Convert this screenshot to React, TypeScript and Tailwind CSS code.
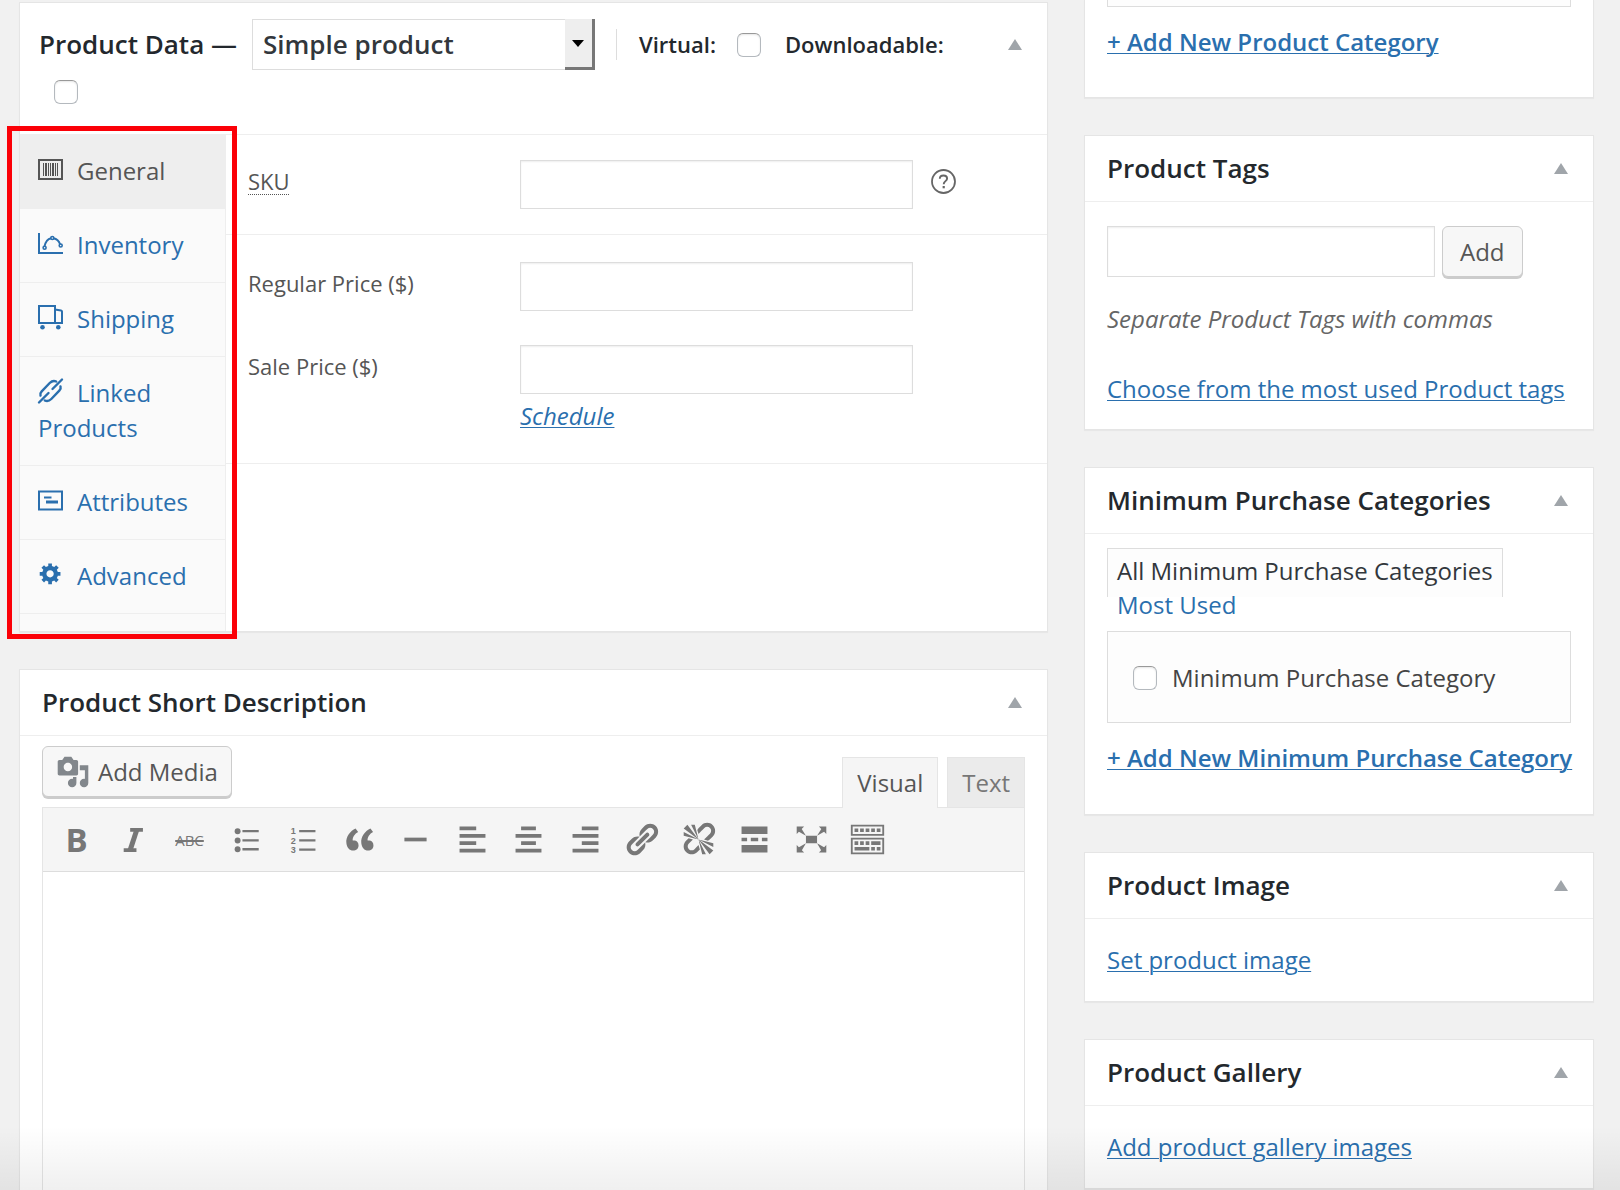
import type { ReactNode } from 'react';

const LINK = 'text-[#2a6fae] underline decoration-1 underline-offset-2';
const FIELD = 'border border-[#ddd] bg-white shadow-[inset_0_1px_2px_rgba(0,0,0,0.07)] outline-none';
const CHECKBOX =
  'size-6 shrink-0 appearance-none rounded-[6px] border border-[#b4b9be] border-t-[#999] bg-white shadow-[inset_0_1px_2px_rgba(0,0,0,0.1)]';
const BUTTON =
  'rounded-[6px] border border-[#ccc] bg-[#f7f7f7] text-2xl text-[#555] shadow-[0_2px_0_#ccc]';

const TABS: { label: string; icon: ReactNode }[] = [
  {
    label: 'General',
    icon: (
      <>
        <rect x="1" y="5" width="23" height="19" fill="none" stroke="currentColor" strokeWidth="2" />
        <path d="M5 8h1v13H5zM7 8h2v13H7zM10 8h1v13h-1zM12 8h1v13h-1zM14 8h2v13h-2zM17 8h1v13h-1zM19 8h1v13h-1z" />
      </>
    ),
  },
  {
    label: 'Inventory',
    icon: (
      <g fill="none" stroke="currentColor">
        <path d="M1 4v20h24" strokeWidth="2" />
        <path d="M6.5 17.5C7.500 13 9.500 10 13 9.300M15.500 9.300C19 10 21 12 22.200 15.500" strokeWidth="1.900" />
        <circle cx="6.600" cy="18.800" r="1.500" strokeWidth="1.600" />
        <circle cx="14.300" cy="9" r="1.500" strokeWidth="1.600" />
        <circle cx="22.700" cy="16.500" r="1.500" strokeWidth="1.600" />
      </g>
    ),
  },
  {
    label: 'Shipping',
    icon: (
      <>
        <path d="M1 3h16v17H1zM17 6.500l6 1c.6.1 1 .5 1 1V20h-7" fill="none" stroke="currentColor" strokeWidth="2" />
        <circle cx="4.500" cy="24.300" r="2.300" />
        <circle cx="20.300" cy="24.300" r="2.300" />
      </>
    ),
  },
  {
    label: 'Linked Products',
    icon: (
      <g fill="none" stroke="currentColor" strokeWidth="2.400" strokeLinecap="round">
        <path d="M2.500 18.500c-.6-1.800 0-3 1.200-4.200l8-8.300c2-2 4.500-2.500 6.500-1.500M24 2.500L14.500 12" />
        <path d="M22.500 9.500c.6 1.800 0 3-1.200 4.200l-8 8.300c-2 2-4.500 2.500-6.500 1.500M1 25.500L10.500 16" />
      </g>
    ),
  },
  {
    label: 'Attributes',
    icon: (
      <>
        <rect x="1" y="5.500" width="23" height="18" fill="none" stroke="currentColor" strokeWidth="2" />
        <path d="M6 10.500h7.500v2H6zM8 14.500h12v3H8z" />
      </>
    ),
  },
  {
    label: 'Advanced',
    icon: (
      <path
        transform="translate(.5 1) scale(1.220)"
        d="M18 12h-2.180c-.17.7-.44 1.350-.81 1.930l1.540 1.540-2.100 2.100-1.540-1.540c-.58.36-1.230.63-1.910.79V19H8v-2.180c-.68-.16-1.330-.43-1.910-.79l-1.540 1.540-2.120-2.120 1.540-1.540c-.36-.58-.63-1.230-.79-1.910H1V9.030h2.170c.16-.7.44-1.350.8-1.940L2.430 5.550l2.100-2.100 1.540 1.540c.58-.37 1.240-.64 1.930-.81V2h3v2.180c.68.16 1.330.43 1.910.79l1.540-1.540 2.120 2.120-1.540 1.540c.36.59.64 1.240.8 1.940H18V12zm-8.500 1.500c1.660 0 3-1.340 3-3s-1.340-3-3-3-3 1.340-3 3 1.340 3 3 3z"
      />
    ),
  },
];

const LINK_ICON =
  'M17.74 2.76c1.68 1.69 1.68 4.41 0 6.1l-1.53 1.52c-1.12 1.12-2.7 1.47-4.14 1.09l2.62-2.61.76-.77.76-.76c.84-.84.84-2.2 0-3.04-.84-.85-2.2-.85-3.04 0l-.77.76-3.38 3.38c-.37-1.44-.02-3.02 1.1-4.14l1.52-1.53c1.69-1.68 4.42-1.68 6.1 0zM8.59 13.43l5.34-5.34c.42-.42.42-1.1 0-1.52-.44-.43-1.13-.39-1.53 0l-5.33 5.34c-.42.42-.42 1.1 0 1.52.44.43 1.13.39 1.52 0zm-.76 2.29l4.14-4.15c.38 1.44.03 3.02-1.09 4.14l-1.52 1.53c-1.69 1.68-4.41 1.68-6.1 0-1.68-1.68-1.68-4.42 0-6.1l1.53-1.52c1.12-1.12 2.7-1.47 4.14-1.1l-4.14 4.15c-.85.84-.85 2.2 0 3.05.84.84 2.2.84 3.04 0z';
const UNLINK_ICON =
  'M17.74 2.26c1.68 1.69 1.68 4.41 0 6.1l-1.53 1.52c-.32.33-.69.58-1.08.77L13 10l1.69-1.64.76-.77.76-.76c.84-.84.84-2.2 0-3.04-.84-.85-2.2-.85-3.04 0l-.77.76-.76.76L10 7l-.65-2.14c.19-.38.44-.75.77-1.07l1.52-1.53c1.69-1.68 4.42-1.68 6.1 0zM2 4l8 6-6-8zm4-2l4 8-2-8H6zM2 6l8 4-8-2V6zm7.36 7.69L10 13l.74 2.35-1.38 1.39c-1.69 1.68-4.41 1.68-6.1 0-1.68-1.68-1.68-4.42 0-6.1l1.39-1.38L7 10l-.69.64-1.52 1.53c-.85.84-.85 2.2 0 3.04.84.85 2.2.85 3.04 0zM18 16l-8-6 6 8zm-4 2l-4-8 2 8h2zm4-4l-8-4 8 2v2z';
const QUOTE_ICON =
  'M9.49 13.22c0-.74-.2-1.38-.61-1.9-.62-.78-1.83-.88-2.53-.72-.29-1.65 1.11-3.75 2.92-4.65L7.88 4c-2.73 1.3-5.42 4.28-4.96 8.05C3.21 14.43 4.59 16 6.54 16c.85 0 1.56-.25 2.12-.75s.83-1.18.83-2.03zm8.05 0c0-.74-.2-1.38-.61-1.9-.63-.78-1.83-.88-2.53-.72-.29-1.65 1.11-3.75 2.92-4.65L15.93 4c-2.73 1.3-5.41 4.28-4.95 8.05.29 2.38 1.66 3.95 3.61 3.95.85 0 1.56-.25 2.12-.75s.83-1.18.83-2.03z';
const KITCHEN_SINK_ICON =
  'M19 2v6H1V2h18zm-1 5V3H2v4h16zM5 4v2H3V4h2zm3 0v2H6V4h2zm3 0v2H9V4h2zm3 0v2h-2V4h2zm3 0v2h-2V4h2zm2 5v9H1V9h18zm-1 8v-7H2v7h16zM5 11v2H3v-2h2zm3 0v2H6v-2h2zm3 0v2H9v-2h2zm6 0v2h-5v-2h5zm-6 3v2H3v-2h8zm3 0v2h-2v-2h2zm3 0v2h-2v-2h2z';
const MEDIA_ICON =
  'M13 11V4c0-.55-.45-1-1-1h-1.67L9 1H5L3.67 3H2c-.55 0-1 .45-1 1v7c0 .55.45 1 1 1h10c.55 0 1-.45 1-1zM7 4.5c1.38 0 2.5 1.12 2.5 2.5S8.38 9.5 7 9.5 4.5 8.38 4.5 7 5.62 4.5 7 4.5zM14 6h5v10.5c0 1.38-1.12 2.5-2.5 2.5S14 17.88 14 16.5s1.12-2.5 2.5-2.5c.17 0 .34.02.5.05V9h-3V6zm-4 8.05V13h2v3.5c0 1.38-1.12 2.5-2.5 2.5S7 17.88 7 16.5 8.12 14 9.5 14c.17 0 .34.02.5.05z';

const TOOLS: { name: string; text?: ReactNode; icon?: ReactNode }[] = [
  { name: 'Bold', text: <span className="text-[33px] leading-8 font-bold">B</span> },
  {
    name: 'Italic',
    icon: (
      <g fill="none" stroke="currentColor">
        <path d="M8.200 4.800h6.900M4.700 15.700h6.900" strokeWidth="2" />
        <path d="M11.700 5L8.100 16" strokeWidth="2.700" />
      </g>
    ),
  },
  {
    name: 'Strikethrough',
    text: <span className="text-[15px] leading-8 font-medium line-through decoration-2">ABC</span>,
  },
  {
    name: 'Bulleted list',
    icon: (
      <>
        <circle cx="5.200" cy="5.500" r="1.600" />
        <circle cx="5.200" cy="10.500" r="1.600" />
        <circle cx="5.200" cy="15.300" r="1.600" />
        <path d="M7.800 4.800h8.800v1.300H7.800zM7.800 9.800h8.800v1.300H7.800zM7.800 14.600h8.800v1.300H7.800z" />
      </>
    ),
  },
  {
    name: 'Numbered list',
    icon: (
      <>
        <g fontFamily="Liberation Sans" fontSize="4.900" fontWeight="700">
          <text x="3.700" y="7">1</text>
          <text x="3.700" y="12.200">2</text>
          <text x="3.700" y="17.400">3</text>
        </g>
        <path d="M8.200 4.800h8.800v1.300H8.200zM8.200 9.800h8.800v1.300H8.200zM8.200 14.800h8.800v1.300H8.200z" />
      </>
    ),
  },
  { name: 'Blockquote', icon: <path d={QUOTE_ICON} /> },
  { name: 'Horizontal line', icon: <path d="M4 9h12v2H4z" /> },
  { name: 'Align left', icon: <path d="M12 5V3H3v2h9zm5 4V7H3v2h14zm-5 4v-2H3v2h9zm5 4v-2H3v2h14z" /> },
  { name: 'Align center', icon: <path d="M14 5V3H6v2h8zm3 4V7H3v2h14zm-3 4v-2H6v2h8zm3 4v-2H3v2h14z" /> },
  { name: 'Align right', icon: <path d="M17 5V3H8v2h9zm0 4V7H3v2h14zm0 4v-2H8v2h9zm0 4v-2H3v2h14z" /> },
  { name: 'Insert link', icon: <path d={LINK_ICON} /> },
  { name: 'Remove link', icon: <path d={UNLINK_ICON} /> },
  { name: 'Read more', icon: <path d="M17 7V3H3v4h14zM6 11V9H3v2h3zm6 0V9H8v2h4zm5 0V9h-3v2h3zm0 6v-4H3v4h14z" /> },
  {
    name: 'Fullscreen',
    icon: (
      <path d="M7 8h6v4H7zM2 13v4h4l-1.200-1.200L7 12l-3.800 2.200zM14 17h4v-4l-1.200 1.200L13 12l2.200 3.800zM14 3l1.300 1.300L13 8l3.800-2.200L18 7V3zM6 3H2v4l1.200-1.200L7 8 4.700 4.300z" />
    ),
  },
  { name: 'Toolbar toggle', icon: <path d={KITCHEN_SINK_ICON} /> },
];

function Toggle() {
  return (
    <button type="button" aria-label="Toggle panel" className="text-[#a0a5aa]">
      <svg className="h-[11px] w-3.5" viewBox="0 0 14 11" fill="currentColor">
        <path d="M7 0l7 11H0z" />
      </svg>
    </button>
  );
}

function Card({ title, children }: { title?: string; children: ReactNode }) {
  return (
    <section className="border border-[#e5e5e5] bg-white shadow-[0_1px_1px_rgba(0,0,0,0.04)] first:border-t-0">
      {title && (
        <header className="flex h-[66px] items-center justify-between border-b border-[#eee] pr-[25px] pl-[22px]">
          <h2 className="text-[26px] font-semibold text-[#23282d]">{title}</h2>
          <Toggle />
        </header>
      )}
      <div className="px-[22px]">{children}</div>
    </section>
  );
}

function ProductData() {
  return (
    <section className="border border-[#e5e5e5] bg-white shadow-[0_1px_1px_rgba(0,0,0,0.04)]">
      <header className="flex items-start justify-between border-b border-[#eee] pt-4 pr-[25px] pb-[30px] pl-[19px] text-[22px] font-semibold text-[#23282d]">
        <div className="flex max-w-[935px] flex-1 flex-wrap items-center gap-y-2.5">
          <h2 className="mr-[15px] text-[26px]">Product Data —</h2>
          <div className="relative mr-[21px] h-[51px] w-[343px]">
            <select
              aria-label="Product type"
              className="h-full w-full appearance-none border border-[#ddd] bg-white pl-2.5 text-[26px] text-[#32373c] outline-none"
            >
              <option>Simple product</option>
            </select>
            <span className="pointer-events-none absolute inset-y-0 right-0 flex w-[30px] items-center justify-center border-r-3 border-b-3 border-[#777] bg-[#eee]">
              <svg className="h-[7px] w-3" viewBox="0 0 12 7">
                <path d="M0 0h12L6 7z" />
              </svg>
            </span>
          </div>
          <div className="mr-[22px] h-[31px] w-px bg-[#ddd]" />
          <label htmlFor="virtual">Virtual:</label>
          <input id="virtual" type="checkbox" className={`${CHECKBOX} mr-6 ml-[21px]`} />
          <label htmlFor="downloadable">Downloadable:</label>
          <input id="downloadable" type="checkbox" className={`${CHECKBOX} ml-[15px]`} />
        </div>
        <div className="flex h-[51px] items-center">
          <Toggle />
        </div>
      </header>

      <div className="flex">
        <nav className="relative w-[206px] shrink-0 border-r border-[#eee] bg-[#fafafa] pb-[17px]">
          {TABS.map((tab, i) => (
            <a
              key={tab.label}
              href="#"
              className={`block border-b border-[#eee] pt-[18px] pr-4 pb-5 pl-[18px] text-2xl leading-[35px] ${
                i === 0 ? 'bg-[#eee] text-[#555]' : 'text-[#2a6fae]'
              }`}
            >
              <svg className="mr-3.5 inline size-[25px] overflow-visible align-baseline" viewBox="0 0 25 25" fill="currentColor">
                {tab.icon}
              </svg>
              {tab.label}
            </a>
          ))}
          <div className="pointer-events-none absolute -top-[9px] -right-3 -bottom-2 -left-[13px] border-5 border-[#fb0007]" />
        </nav>

        <div className="flex-1 text-[22px] leading-[43px] text-[#555]">
          <div className="flex items-start border-b border-[#eee] py-[25px] pl-[22px]">
            <label htmlFor="sku" className="w-[272px] shrink-0">
              <abbr className="underline decoration-dotted decoration-1 underline-offset-4">SKU</abbr>
            </label>
            <input id="sku" className={`${FIELD} h-[49px] w-[393px]`} />
            <svg className="mt-[9px] ml-[18px] size-[25px]" viewBox="0 0 25 25" fill="none" stroke="#666">
              <circle cx="12.500" cy="12.500" r="11.500" strokeWidth="1.800" />
              <path d="M8.800 9.800c0-2.300 1.600-3.300 3.700-3.300s3.600 1.100 3.600 3c0 2.700-3.400 2.600-3.400 5.700" strokeWidth="1.900" />
              <path d="M12.700 17v2.300" strokeWidth="2.200" />
            </svg>
          </div>
          <div className="border-b border-[#eee] pt-[27px] pb-[25px] pl-[22px]">
            <div className="mb-[34px] flex items-start">
              <label htmlFor="regular-price" className="w-[272px] shrink-0">Regular Price ($)</label>
              <input id="regular-price" className={`${FIELD} h-[49px] w-[393px]`} />
            </div>
            <div className="flex items-start">
              <label htmlFor="sale-price" className="w-[272px] shrink-0">Sale Price ($)</label>
              <div className="flex flex-col items-start">
                <input id="sale-price" className={`${FIELD} h-[49px] w-[393px]`} />
                <a href="#" className={`${LINK} text-2xl leading-11 italic`}>Schedule</a>
              </div>
            </div>
          </div>
        </div>
      </div>
    </section>
  );
}

function ShortDescription() {
  return (
    <Card title="Product Short Description">
      <div className="flex items-end justify-between pt-2.5">
        <button type="button" className={`${BUTTON} mb-2.5 flex h-[51px] items-center gap-2 px-[13px]`}>
          <svg className="size-[34px] text-[#82878c]" viewBox="0 0 20 20" fill="currentColor">
            <path d={MEDIA_ICON} />
          </svg>
          Add Media
        </button>
        <div className="-mb-px flex gap-[9px] text-2xl">
          <button type="button" className="h-[51px] border border-b-0 border-[#e5e5e5] bg-[#f5f5f5] px-3.5 text-[#555]">
            Visual
          </button>
          <button type="button" className="h-[51px] border border-[#e5e5e5] bg-[#ebebeb] px-3.5 text-[#777]">
            Text
          </button>
        </div>
      </div>
      <div className="border border-[#e5e5e5]">
        <div className="border-b border-[#ddd] bg-[#f5f5f5] pl-[15px]">
          <div className="flex h-[63px] w-[828px] items-center justify-between text-[#777]">
            {TOOLS.map(tool => (
              <button key={tool.name} type="button" aria-label={tool.name} className="flex size-[37px] items-center justify-center">
                {tool.text ?? (
                  <svg className="size-[37px]" viewBox="0 0 20 20" fill="currentColor">{tool.icon}</svg>
                )}
              </button>
            ))}
          </div>
        </div>
        <textarea aria-label="Product short description" className="block h-[360px] w-full resize-none outline-none" />
      </div>
    </Card>
  );
}

export default function App() {
  return (
    <div className="relative flex h-screen gap-9 overflow-hidden bg-[#f1f1f1] pr-[26px] pl-[19px] font-['Open_Sans',sans-serif] text-2xl text-[#444]">
      <main className="flex min-w-0 flex-1 flex-col gap-[37px] pt-0.5">
        <ProductData />
        <ShortDescription />
      </main>

      <aside className="flex w-[510px] shrink-0 flex-col gap-[37px]">
        <Card>
          <div className="h-[7px] border border-t-0 border-[#ddd] bg-[#fdfdfd]" />
          <a href="#" className={`${LINK} mt-[13px] mb-[33px] block w-fit leading-11 font-semibold`}>
            + Add New Product Category
          </a>
        </Card>

        <Card title="Product Tags">
          <div className="flex gap-[7px] pt-6">
            <input aria-label="Product tags" className={`${FIELD} h-[51px] w-[328px]`} />
            <button type="button" className={`${BUTTON} h-[51px] px-[17px]`}>Add</button>
          </div>
          <p className="mt-6 leading-9 text-[#666] italic">Separate Product Tags with commas</p>
          <a href="#" className={`${LINK} mt-[34px] mb-[22px] block w-fit leading-9`}>
            Choose from the most used Product tags
          </a>
        </Card>

        <Card title="Minimum Purchase Categories">
          <ul className="pt-5 leading-[34px]">
            <li>
              <a href="#" className="border border-b-0 border-[#ddd] bg-[#fdfdfd] px-[9px] pt-[5px] pb-2.5 text-[#32373c]">
                All Minimum Purchase Categories
              </a>
            </li>
            <li className="relative px-2.5">
              <a href="#" className="text-[#2a6fae]">Most Used</a>
            </li>
          </ul>
          <div className="mt-[9px] border border-[#ddd] bg-[#fdfdfd] pt-7 pb-[26px] pl-[25px]">
            <label className="flex items-center gap-[15px] leading-9">
              <input type="checkbox" className={CHECKBOX} />
              Minimum Purchase Category
            </label>
          </div>
          <a href="#" className={`${LINK} mt-[13px] mb-[34px] block w-fit leading-11 font-semibold whitespace-nowrap`}>
            + Add New Minimum Purchase Category
          </a>
        </Card>

        <Card title="Product Image">
          <a href="#" className={`${LINK} mt-[23px] mb-[23px] block w-fit leading-9`}>Set product image</a>
        </Card>

        <Card title="Product Gallery">
          <a href="#" className={`${LINK} mt-[23px] mb-[23px] block w-fit leading-9`}>Add product gallery images</a>
        </Card>
      </aside>

      <div className="pointer-events-none absolute inset-x-0 bottom-0 h-16 bg-linear-to-b from-transparent to-black/6" />
    </div>
  );
}
